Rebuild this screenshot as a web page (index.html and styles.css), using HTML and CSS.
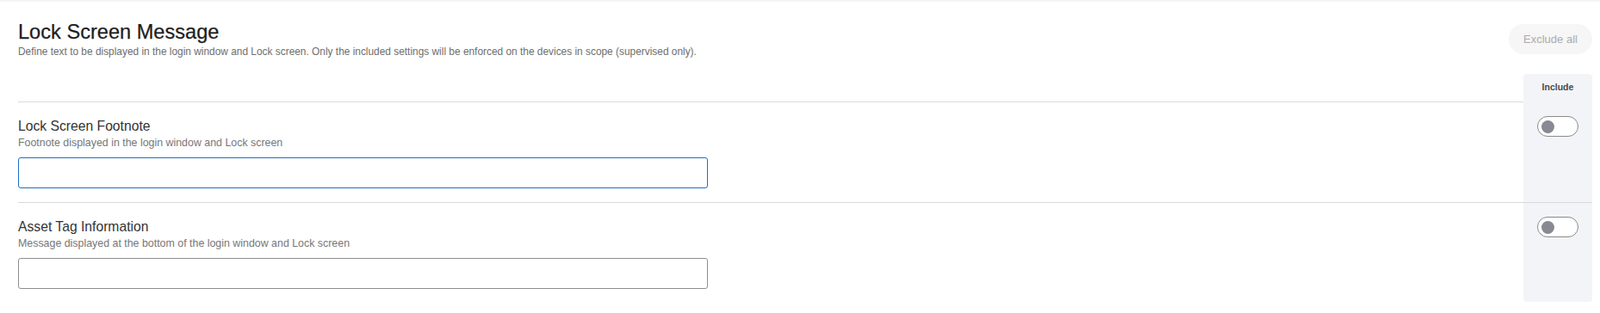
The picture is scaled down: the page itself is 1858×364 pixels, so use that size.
FILE: index.html
```html
<!DOCTYPE html>
<html>
<head>
  <meta charset="utf-8">
  <link rel="stylesheet" href="styles.css">
</head>
<body>
  <div class="page">
    <div class="top">
      <div class="intro">
        <h1 class="title">Lock Screen Message</h1>
        <p class="description">Define text to be displayed in the login window and Lock screen. Only the included settings will be enforced on the devices in scope (supervised only).</p>
      </div>
      <button class="exclude-button">Exclude all</button>
    </div>

    <div class="settings">
      <div class="row head-row">
        <div class="main-cell"></div>
        <div class="include-cell">Include</div>
      </div>

      <div class="row setting-row">
        <div class="main-cell">
          <div class="setting-label">Lock Screen Footnote</div>
          <div class="setting-help">Footnote displayed in the login window and Lock screen</div>
          <input class="text-input focused" type="text">
        </div>
        <div class="include-cell">
          <span class="toggle"><span class="knob"></span></span>
        </div>
      </div>

      <div class="row setting-row">
        <div class="main-cell">
          <div class="setting-label">Asset Tag Information</div>
          <div class="setting-help">Message displayed at the bottom of the login window and Lock screen</div>
          <input class="text-input" type="text">
        </div>
        <div class="include-cell">
          <span class="toggle"><span class="knob"></span></span>
        </div>
      </div>
    </div>
  </div>
</body>
</html>
```

FILE: styles.css
```css
body {
  margin: 0;
  background: white;
  font-family: 'Liberation Sans', Arial, sans-serif;
  border-top: 2px solid #f4f4f4;
}

.page {
  padding: 0 9px 0 21px;
}

.top {
  display: flex;
  justify-content: space-between;
  align-items: flex-start;
  padding-top: 21px;
  padding-bottom: 18px;
}

.title {
  font-size: 23.6px;
  line-height: 29px;
  font-weight: normal;
  color: #1e1e1e;
  margin: 0;
  -webkit-text-stroke: 0.25px #1e1e1e;
}

.description {
  font-size: 11.9px;
  line-height: 16px;
  color: #6e6e6e;
  margin: 0;
}

.exclude-button {
  margin-top: 5px;
  height: 35px;
  width: 97px;
  border: none;
  border-radius: 18px;
  background: #f6f6f7;
  color: #ababab;
  font-family: inherit;
  font-size: 13px;
  padding: 0;
}

.row {
  display: flex;
}

.main-cell {
  flex: 1;
}

.include-cell {
  width: 80px;
  background: #f3f4f8;
  display: flex;
  justify-content: center;
}

.head-row .main-cell {
  height: 32px;
  border-bottom: 1px solid #d9d9d9;
}

.head-row .include-cell {
  border-radius: 4px 4px 0 0;
  align-items: flex-start;
  padding-top: 8px;
  font-size: 10.5px;
  line-height: 14px;
  font-weight: bold;
  color: #4a4a4a;
}

.setting-row {
  border-bottom: 1px solid #d9d9d9;
}

.setting-row:last-child {
  border-bottom: none;
}

.setting-row:last-child .include-cell {
  border-radius: 0 0 4px 4px;
}

.setting-row .main-cell {
  padding: 18px 0 16px;
}

.setting-row:last-child .main-cell {
  padding-bottom: 15px;
}

.setting-row .include-cell {
  padding-top: 16px;
  align-items: flex-start;
}

.setting-label {
  font-size: 15.7px;
  line-height: 20px;
  color: #333;
}

.setting-help {
  font-size: 12.4px;
  line-height: 16px;
  color: #777;
  margin-top: 1px;
}

.text-input {
  display: block;
  box-sizing: border-box;
  width: 801px;
  height: 36px;
  margin-top: 9px;
  border: 1px solid #8e8e8e;
  border-radius: 3px;
  background: white;
  outline: none;
}

.text-input.focused {
  border-color: #1d6fc6;
}

.toggle {
  box-sizing: border-box;
  display: flex;
  align-items: center;
  width: 48px;
  height: 24px;
  border: 1px solid #8a8a8a;
  border-radius: 12px;
  background: white;
  padding-left: 4px;
}

.knob {
  width: 15px;
  height: 15px;
  border-radius: 50%;
  background: #878a92;
}
```
